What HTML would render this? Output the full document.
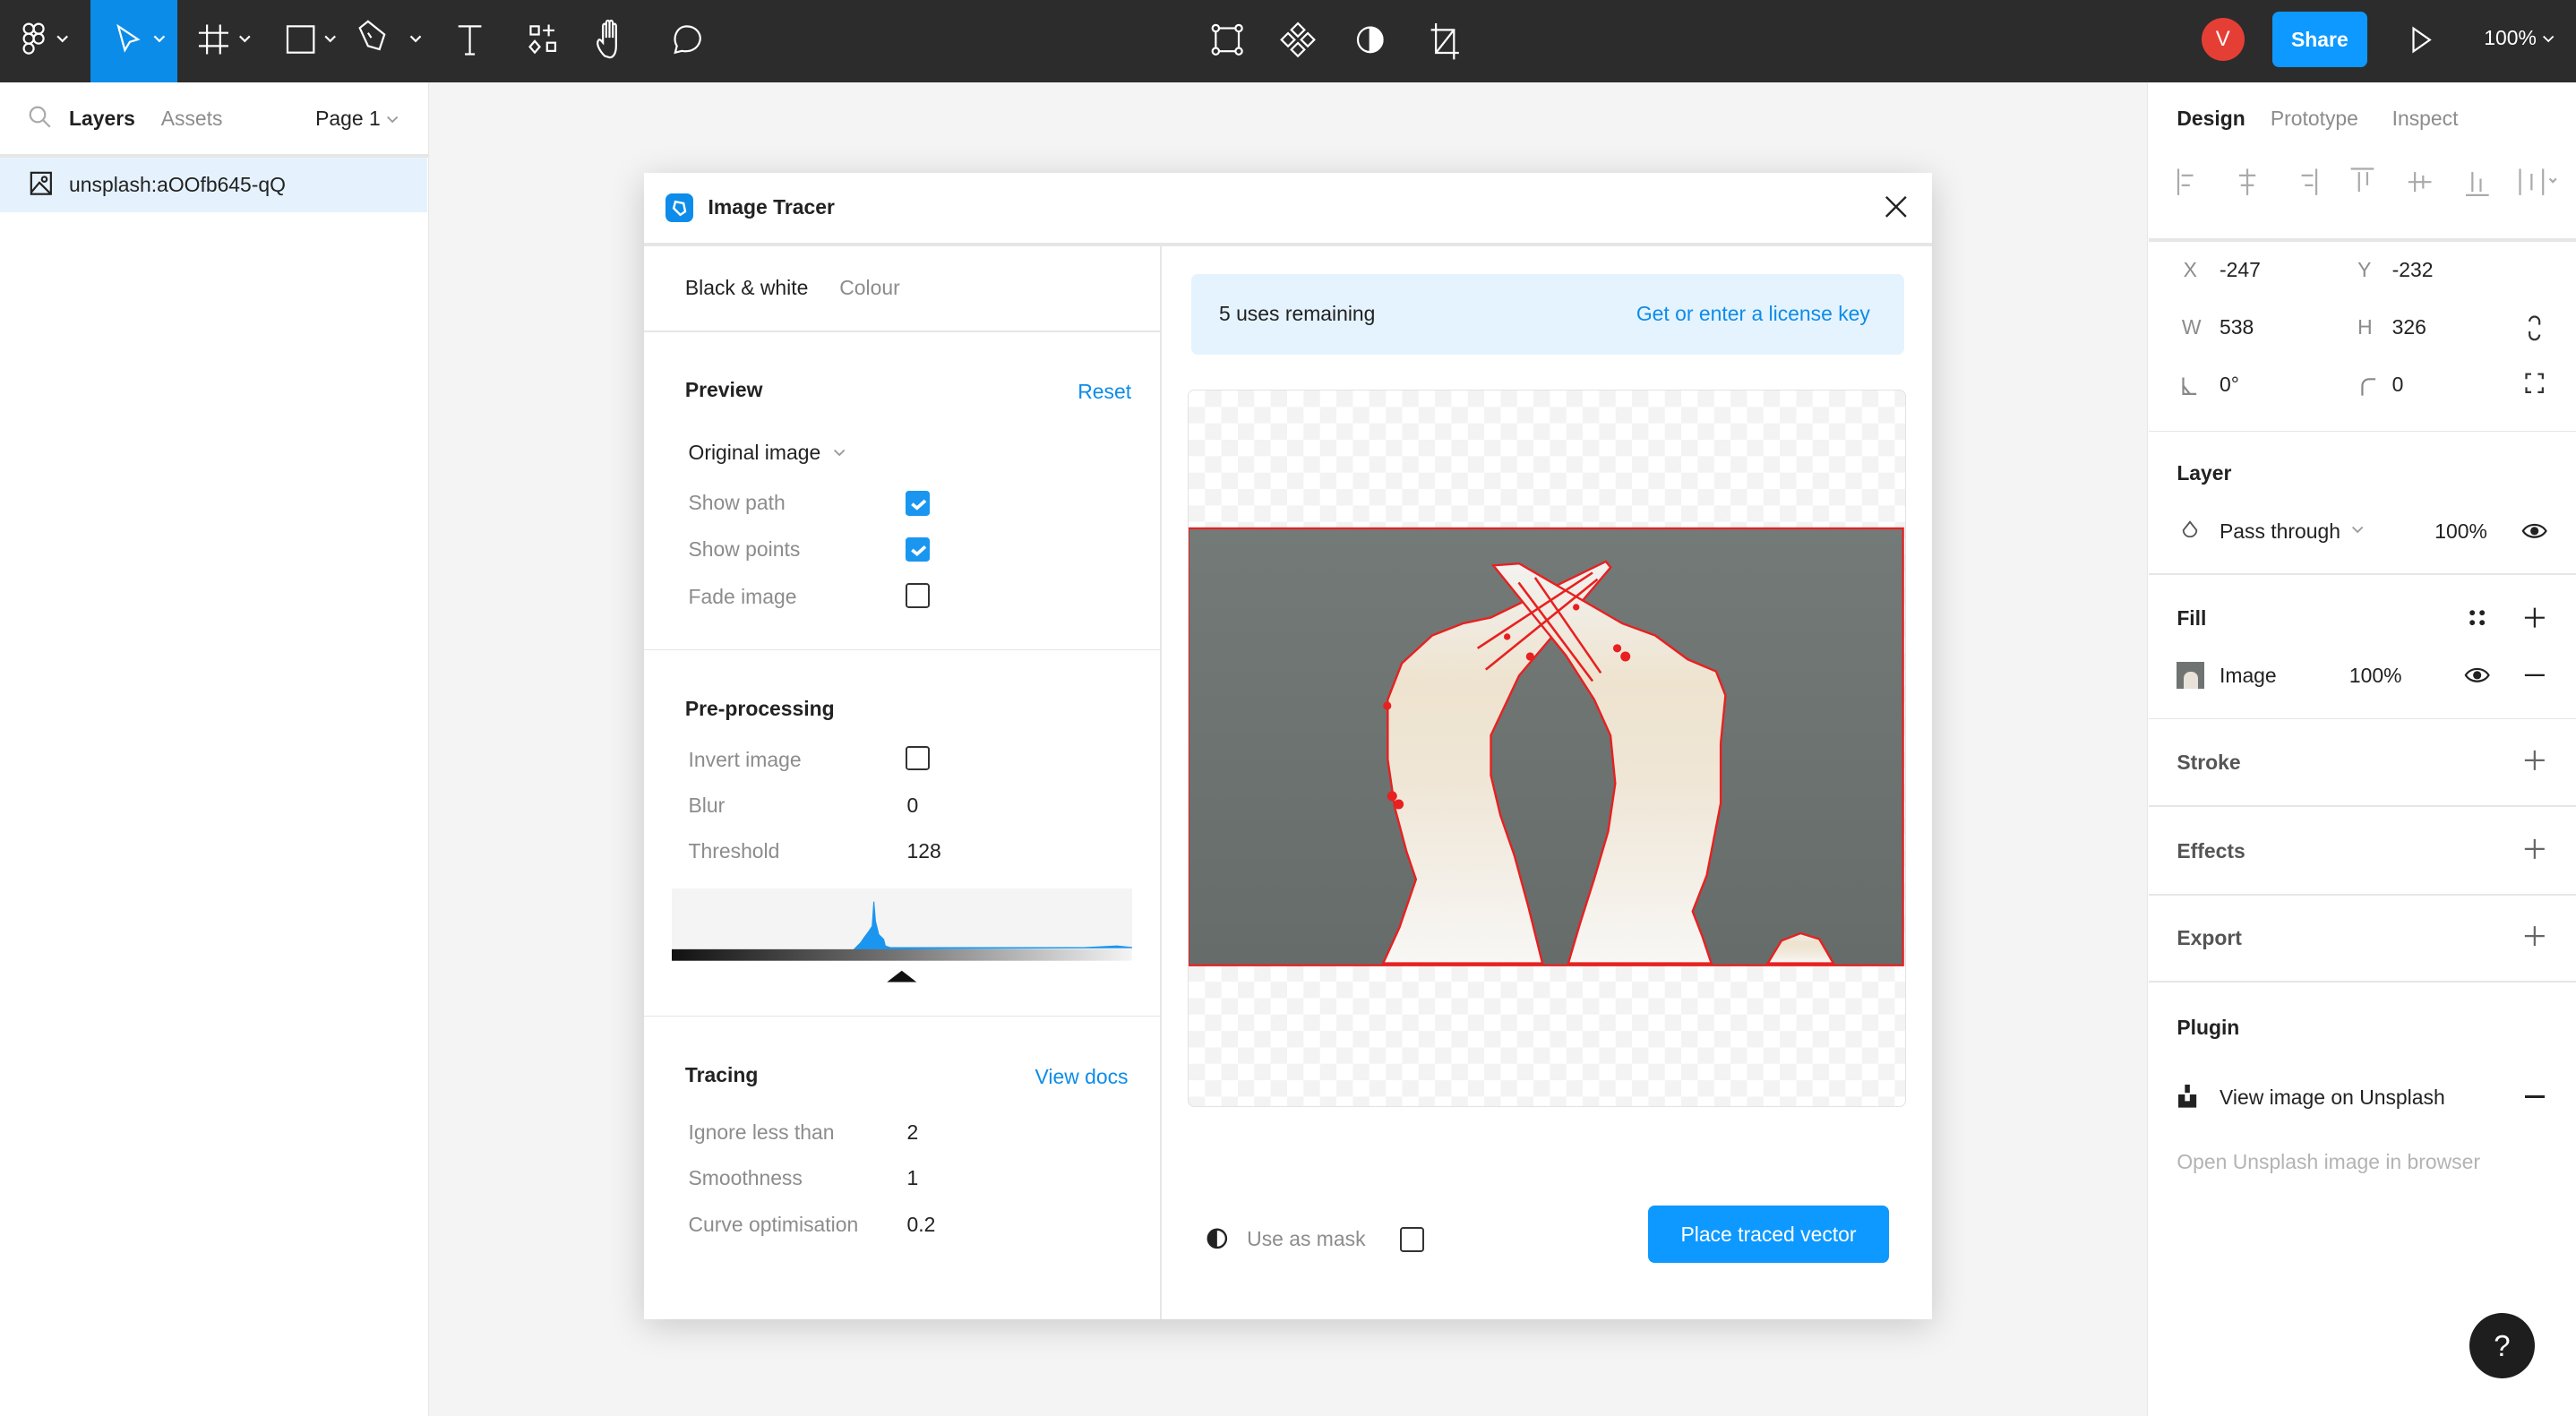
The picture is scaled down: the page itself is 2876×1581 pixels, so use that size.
<!DOCTYPE html>
<html><head><meta charset="utf-8"><style>
*{box-sizing:border-box;margin:0;padding:0}
html,body{width:2876px;height:1580px;overflow:hidden;background:#f4f4f4}
#r{position:absolute;left:0;top:0;width:1568px;height:862px;zoom:1.8342;font-family:"Liberation Sans",sans-serif;font-size:12.5px;color:#222}
.a{position:absolute;white-space:nowrap}
.g{color:#8c8c8c}.b{font-weight:bold}.bl{color:#0d8ce9}
.cb{position:absolute;width:15px;height:15px;border:1.5px solid #333;border-radius:2px;background:#fff}
.cbon{background:#1a96f0;border-color:#1a96f0}
.hr{position:absolute;height:1px;background:#e6e6e6}
</style></head><body><div id="r">
<!-- top bar -->
<div class="a" style="left:0;top:0;width:1568px;height:50px;background:#2c2c2c"></div>
<div class="a" style="left:55px;top:0;width:53px;height:50px;background:#0c8ce9"></div>
<svg class="a" style="left:0;top:0" width="460" height="50" fill="none" stroke="#fff" stroke-width="1.2">
<g transform="translate(14,14)"><rect x="0.5" y="0.5" width="6" height="6" rx="3"/><rect x="6.5" y="0.5" width="6" height="6" rx="3"/><rect x="0.5" y="6.5" width="6" height="6" rx="3"/><circle cx="9.5" cy="9.5" r="3"/><rect x="0.5" y="12.5" width="6" height="6" rx="3"/></g>
<path d="M35 22l3 3 3-3M94 22l3 3 3-3M146 22l3 3 3-3M198 22l3 3 3-3M250 22l3 3 3-3"/>
<path d="M72 16l12 8-5 1.5-3 5z"/>
<path d="M126 15v18M134 15v18M121 20h18M121 28h18"/>
<rect x="175" y="16" width="16" height="16"/>
<path d="M219 17l5-4 10 8-3 9-7-2zM224 20l2 3"/>
<path d="M279 16h14M286 16v17M283 33h6"/>
<rect x="323" y="16" width="5" height="5"/><path d="M334 15v7M330.5 18.5h7"/><path d="M325.5 25l3 3.5-3 3.5-3-3.5z"/><rect x="333" y="26" width="5" height="5"/>
<path d="M368 34c-3-3-5-7-4-9s2 0 3 1v-10c0-2 2-2 2 0v7-9c0-2 2-2 2 0v9-9c0-2 2-2 2 0v9-7c0-2 2-2 2 0v12c0 5-2 7-4 7z"/>
<path d="M411 32l1-4c-3-5 0-12 6-12s9 5 8 9-5 7-11 6z"/>
</svg>
<svg class="a" style="left:730;top:8" width="170" height="34" fill="none" stroke="#fff" stroke-width="1.2">
<rect x="10" y="9" width="14" height="14"/><circle cx="10" cy="9" r="2" fill="#2c2c2c"/><circle cx="24" cy="9" r="2" fill="#2c2c2c"/><circle cx="10" cy="23" r="2" fill="#2c2c2c"/><circle cx="24" cy="23" r="2" fill="#2c2c2c"/>
<path d="M60 6l4 4-4 4-4-4zM60 18l4 4-4 4-4-4zM54 12l4 4-4 4-4-4zM66 12l4 4-4 4-4-4z"/>
<circle cx="104" cy="16" r="7.5"/><path d="M104 8.5a7.5 7.5 0 0 1 0 15z" fill="#fff"/>
<path d="M144 6v18h14M141 10h14v18M155 10l-11 14"/>
</svg>
<div class="a" style="left:1340px;top:11px;width:26px;height:26px;border-radius:50%;background:#e53f35;color:#fff;text-align:center;line-height:26px;font-size:13px">V</div>
<div class="a" style="left:1383px;top:7px;width:58px;height:34px;border-radius:4px;background:#0d99ff;color:#fff;text-align:center;line-height:34px;font-weight:bold;font-size:12.5px">Share</div>
<svg class="a" style="left:1466;top:15" width="16" height="18" fill="none" stroke="#fff" stroke-width="1.2"><path d="M3 2l10 7-10 7z"/></svg>
<div class="a" style="left:1512px;top:16px;color:#fff;font-size:12.5px">100%</div>
<svg class="a" style="left:1546;top:19" width="10" height="10" fill="none" stroke="#fff"><path d="M2 3l3 3 3-3"/></svg>

<!-- left panel -->
<div class="a" style="left:0;top:50px;width:261px;height:812px;background:#fff;border-right:1px solid #e6e6e6"></div>
<svg class="a" style="left:17;top:64" width="15" height="15" fill="none" stroke="#aaa" stroke-width="1.2"><circle cx="6" cy="6" r="4.5"/><path d="M9.5 9.5l4 4"/></svg>
<div class="a b" style="left:42px;top:65px">Layers</div>
<div class="a g" style="left:98px;top:65px">Assets</div>
<div class="a" style="left:192px;top:65px">Page 1</div>
<svg class="a" style="left:234;top:68" width="10" height="10" fill="none" stroke="#999"><path d="M2 3l3 3 3-3"/></svg>
<div class="hr" style="left:0;top:94px;width:261px;height:2px"></div>
<div class="a" style="left:0;top:96px;width:260px;height:33px;background:#e5f2fd"></div>
<svg class="a" style="left:18;top:104" width="14" height="15" fill="none" stroke="#222" stroke-width="1.2"><rect x="1" y="1" width="12" height="13"/><circle cx="9" cy="5" r="1.5"/><path d="M1 13l5-6 7 7"/></svg>
<div class="a" style="left:42px;top:105px">unsplash:aOOfb645-qQ</div>

<!-- right panel -->
<div class="a" style="left:1307px;top:50px;width:261px;height:812px;background:#fff;border-left:1px solid #e6e6e6"></div>
<div class="a b" style="left:1325px;top:65px">Design</div>
<div class="a g" style="left:1382px;top:65px">Prototype</div>
<div class="a g" style="left:1456px;top:65px">Inspect</div>
<svg class="a" style="left:1320;top:100" width="240" height="22" fill="none" stroke="#aaa" stroke-width="1.2">
<path d="M6 3v16M8 7h7M8 13h5"/><path d="M48 3v16M43 7h10M44 13h8"/><path d="M90 3v16M81 7h7M83 13h5"/><path d="M111 3h14M116 5v12M121 5v8"/><path d="M146 11h14M150 5v12M155 7v8"/><path d="M181 19h14M185 5v12M190 9v8"/><path d="M214 3v16M228 3v16M221 6v10M232 9l2 2 2-2"/>
</svg>
<div class="hr" style="left:1308px;top:145px;width:260px;height:2px"></div>
<div class="a g" style="left:1329px;top:157px">X</div><div class="a" style="left:1351px;top:157px">-247</div>
<div class="a g" style="left:1435px;top:157px">Y</div><div class="a" style="left:1456px;top:157px">-232</div>
<div class="a g" style="left:1328px;top:192px">W</div><div class="a" style="left:1351px;top:192px">538</div>
<div class="a g" style="left:1435px;top:192px">H</div><div class="a" style="left:1456px;top:192px">326</div>
<svg class="a" style="left:1535;top:190" width="16" height="60" fill="none" stroke="#333" stroke-width="1.2"><path d="M5 6a3 3 0 0 1 6 0v2M5 12v2a3 3 0 0 0 6 0"/><path d="M3 41v-3h3M10 38h3v3M13 46v3h-3M6 49h-3v-3"/></svg>
<svg class="a" style="left:1326;top:227" width="130" height="16" fill="none" stroke="#888" stroke-width="1.2"><path d="M3 3v10h8M3 8l4 5"/><path d="M112 14v-6a4 4 0 0 1 4-4h4"/></svg>
<div class="a" style="left:1351px;top:227px">0°</div><div class="a" style="left:1456px;top:227px">0</div>
<div class="hr" style="left:1308px;top:262px;width:260px"></div>
<div class="a b" style="left:1325px;top:281px">Layer</div>
<svg class="a" style="left:1327;top:316" width="12" height="14" fill="none" stroke="#555"><path d="M6 1.5l4 5a4 4 0 1 1-8 0z"/></svg>
<div class="a" style="left:1351px;top:316px">Pass through</div>
<svg class="a" style="left:1430;top:318" width="10" height="10" fill="none" stroke="#999"><path d="M2 3l3 3 3-3"/></svg>
<div class="a" style="left:1482px;top:316px">100%</div>
<svg class="a" style="left:1535;top:316" width="16" height="14"><path d="M1 7c3-5 11-5 14 0-3 5-11 5-14 0z" fill="none" stroke="#222" stroke-width="1.2"/><circle cx="8" cy="7" r="2.5" fill="#222"/></svg>
<div class="hr" style="left:1308px;top:349px;width:260px"></div>
<div class="a b" style="left:1325px;top:369px">Fill</div>
<svg class="a" style="left:1500;top:368" width="56" height="16" fill="#222"><circle cx="5" cy="5" r="1.6"/><circle cx="11" cy="5" r="1.6"/><circle cx="5" cy="11" r="1.6"/><circle cx="11" cy="11" r="1.6"/><path d="M43 2v12M37 8h12" stroke="#222" stroke-width="1.2"/></svg>
<div class="a" style="left:1325px;top:403px;width:17px;height:16px;background:#6f7472"></div>
<div class="a" style="left:1329px;top:409px;width:9px;height:10px;background:#e8e2d8;border-radius:4px 4px 0 0"></div>
<div class="a" style="left:1351px;top:404px">Image</div><div class="a" style="left:1430px;top:404px">100%</div>
<svg class="a" style="left:1500;top:404" width="56" height="14"><path d="M1 7c3-5 11-5 14 0-3 5-11 5-14 0z" fill="none" stroke="#222" stroke-width="1.2"/><circle cx="8" cy="7" r="2.5" fill="#222"/><path d="M37 7h12" stroke="#222" stroke-width="1.2"/></svg>
<div class="hr" style="left:1308px;top:437px;width:260px"></div>
<div class="a b" style="left:1325px;top:457px;color:#555">Stroke</div>
<div class="hr" style="left:1308px;top:490px;width:260px"></div>
<div class="a b" style="left:1325px;top:511px;color:#555">Effects</div>
<div class="hr" style="left:1308px;top:544px;width:260px"></div>
<div class="a b" style="left:1325px;top:564px;color:#555">Export</div>
<svg class="a" style="left:1536;top:456" width="14" height="130" fill="none" stroke="#666" stroke-width="1.2"><path d="M7 1v12M1 7h12M7 55v12M1 61h12M7 108v12M1 114h12"/></svg>
<div class="hr" style="left:1308px;top:597px;width:260px"></div>
<div class="a b" style="left:1325px;top:618px">Plugin</div>
<svg class="a" style="left:1326;top:660" width="14" height="15" fill="#222"><rect x="4" y="0" width="3" height="5"/><path d="M0 6h4v4h3v-4h4v8h-11z"/></svg>
<div class="a" style="left:1351px;top:661px">View image on Unsplash</div>
<div class="a" style="left:1537px;top:667px;width:12px;height:1.5px;background:#222"></div>
<div class="a" style="left:1325px;top:700px;color:#b3b3b3">Open Unsplash image in browser</div>
<div class="a" style="left:1503px;top:799px;width:40px;height:40px;border-radius:50%;background:#1e1e1e;color:#fff;text-align:center;line-height:40px;font-size:18px">?</div>

<!-- dialog -->
<div class="a" style="left:392px;top:105px;width:784px;height:698px;background:#fff;box-shadow:0 4px 20px rgba(0,0,0,.18)"></div>
<div class="a" style="left:405px;top:118px;width:17px;height:17px;border-radius:4px;background:#0d8ce9"></div>
<svg class="a" style="left:405;top:118" width="17" height="17" fill="none" stroke="#fff" stroke-width="1.3"><path d="M6 5l5 1 1 5-3 2-4-4z"/></svg>
<div class="a b" style="left:431px;top:119px">Image Tracer</div>
<svg class="a" style="left:1147;top:119" width="14" height="14" stroke="#222" stroke-width="1.3"><path d="M1 1l12 12M13 1l-12 12"/></svg>
<div class="hr" style="left:392px;top:148px;width:784px;height:2px"></div>
<div class="a" style="left:706px;top:150px;width:1px;height:653px;background:#e6e6e6"></div>
<div class="a" style="left:417px;top:168px">Black &amp; white</div>
<div class="a g" style="left:511px;top:168px">Colour</div>
<div class="hr" style="left:392px;top:201px;width:314px"></div>
<div class="a b" style="left:417px;top:230px">Preview</div>
<div class="a bl" style="left:656px;top:231px">Reset</div>
<div class="a" style="left:419px;top:268px">Original image</div>
<svg class="a" style="left:506;top:271" width="10" height="10" fill="none" stroke="#999"><path d="M2 3l3 3 3-3"/></svg>
<div class="a g" style="left:419px;top:299px">Show path</div>
<div class="a g" style="left:419px;top:327px">Show points</div>
<div class="a g" style="left:419px;top:356px">Fade image</div>
<div class="cb cbon" style="left:551px;top:299px"></div>
<div class="cb cbon" style="left:551px;top:327px"></div>
<svg class="a" style="left:551;top:299" width="15" height="45" fill="none" stroke="#fff" stroke-width="2"><path d="M4 8l3 2.5 5-4.5M4 36l3 2.5 5-4.5"/></svg>
<div class="cb" style="left:551px;top:355px"></div>
<div class="hr" style="left:392px;top:395px;width:314px"></div>
<div class="a b" style="left:417px;top:424px">Pre-processing</div>
<div class="a g" style="left:419px;top:455px">Invert image</div>
<div class="cb" style="left:551px;top:454px"></div>
<div class="a g" style="left:419px;top:483px">Blur</div><div class="a" style="left:552px;top:483px">0</div>
<div class="a g" style="left:419px;top:511px">Threshold</div><div class="a" style="left:552px;top:511px">128</div>
<div class="a" style="left:409px;top:541px;width:280px;height:37px;background:#f4f4f4"></div>
<svg class="a" style="left:409;top:541" width="280" height="60"><path d="M111 37l4-4 2-3 3-4 2-3 1-15 1 12 2 8 3 3 1 4 3 1h118l20-1 10 1z" fill="#1a96f0" stroke="#1a96f0" stroke-width=".6"/>
<defs><linearGradient id="gr"><stop offset="0" stop-color="#111"/><stop offset=".5" stop-color="#777"/><stop offset="1" stop-color="#f4f4f4"/></linearGradient></defs>
<rect x="0" y="37" width="280" height="7" fill="url(#gr)"/><path d="M131 57l9-7 9 7z" fill="#111"/></svg>
<div class="hr" style="left:392px;top:618px;width:314px"></div>
<div class="a b" style="left:417px;top:647px">Tracing</div>
<div class="a bl" style="left:630px;top:648px">View docs</div>
<div class="a g" style="left:419px;top:682px">Ignore less than</div><div class="a" style="left:552px;top:682px">2</div>
<div class="a g" style="left:419px;top:710px">Smoothness</div><div class="a" style="left:552px;top:710px">1</div>
<div class="a g" style="left:419px;top:738px">Curve optimisation</div><div class="a" style="left:552px;top:738px">0.2</div>

<div class="a" style="left:725px;top:167px;width:434px;height:49px;background:#e5f3fe;border-radius:4px"></div>
<div class="a" style="left:742px;top:184px">5 uses remaining</div>
<div class="a bl" style="left:996px;top:184px">Get or enter a license key</div>

<div class="a" style="left:723px;top:237px;width:437px;height:437px;border:1px solid #e3e3e3;border-radius:4px;overflow:hidden;background-color:#fff;background-image:linear-gradient(45deg,#f3f3f3 25%,transparent 25%,transparent 75%,#f3f3f3 75%),linear-gradient(45deg,#f3f3f3 25%,transparent 25%,transparent 75%,#f3f3f3 75%);background-size:20px 20px;background-position:0 0,10px 10px">
<svg width="437" height="437" viewBox="723 237 437 437" style="position:absolute;left:-1px;top:-1px">
<defs><linearGradient id="bg" x1="0" y1="0" x2="0" y2="1"><stop offset="0" stop-color="#737a78"/><stop offset="1" stop-color="#666c6a"/></linearGradient>
<linearGradient id="bd" x1="0" y1="0" x2="0" y2="1"><stop offset="0" stop-color="#f2f2f0"/><stop offset=".3" stop-color="#eee3cf"/><stop offset=".55" stop-color="#efe6d6"/><stop offset="1" stop-color="#f8f7f5"/></linearGradient></defs>
<rect x="724" y="322" width="435" height="266" fill="url(#bg)" stroke="#e82020" stroke-width="1.2"/>
<g fill="url(#bd)" stroke="#e82020" stroke-width="1.3">
<path d="M842.5 586.8L852.5 564.9L862.5 535.7L856.7 518.6L849.6 491.9L845.3 462.7L845.3 426.2L853.9 404.2L872.4 387.2L891 379.9L908.1 376.3L978.1 342.2L981 345.8L925.3 411.6L908.1 448L908.1 472.4L913.9 496.7L922.4 521.1L931 552.7L939.5 586.8Z"/>
<path d="M955.2 586.8L962.4 562.5L970.9 535.7L979.5 506.5L983.8 477.3L980.9 448.1L971 426.2L953.8 399.4L909.6 344.6L925.3 343.4L988.1 379.9L1008.1 387.2L1028 401.8L1045.2 409.1L1050.9 423.7L1048 452.9L1048 489.4L1039.5 533.3L1030.9 555.2L1036.6 569.8L1042.3 586.8Z"/>
<path d="M1076.6 586.8L1085 573L1096.6 568.5L1108 572L1116.6 586.8Z"/>
</g>
<g stroke="#e82020" stroke-width="1.4" fill="none"><path d="M900 395l70-46M905 408l68-55M925 355l45 60M935 352l40 58"/></g>
<g fill="#e82020"><circle cx="845" cy="430" r="2.5"/><circle cx="848" cy="485" r="3"/><circle cx="852" cy="490" r="3"/><circle cx="932" cy="400" r="2.5"/><circle cx="990" cy="400" r="3"/><circle cx="985" cy="395" r="2.5"/><circle cx="918" cy="388" r="2"/><circle cx="960" cy="370" r="2"/></g>
</svg></div>

<svg class="a" style="left:734;top:747" width="14" height="14"><circle cx="7" cy="7" r="5.5" fill="none" stroke="#222" stroke-width="1.3"/><path d="M7 1.5a5.5 5.5 0 0 0 0 11z" fill="#222"/></svg>
<div class="a g" style="left:759px;top:747px">Use as mask</div>
<div class="cb" style="left:852px;top:747px"></div>
<div class="a" style="left:1003px;top:734px;width:147px;height:35px;background:#0d99ff;border-radius:4px;color:#fff;text-align:center;line-height:35px">Place traced vector</div>
</div></body></html>
